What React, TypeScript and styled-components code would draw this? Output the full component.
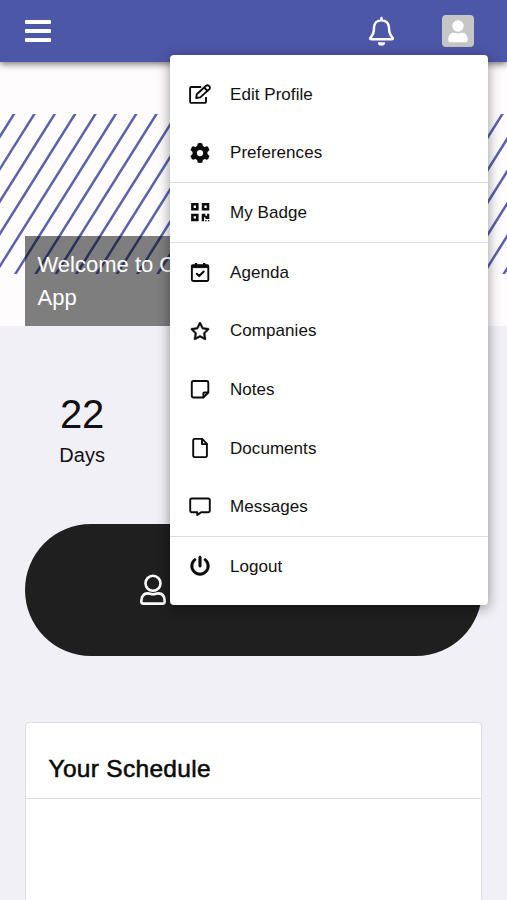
import React from 'react';
import styled, { createGlobalStyle } from 'styled-components';
import { FaGear, FaPowerOff, FaRegStar } from 'react-icons/fa6';

const GlobalStyle = createGlobalStyle`
  * { box-sizing: border-box; }
  html, body { margin: 0; padding: 0; background: #f1f0f6; }
  body { font-family: "Liberation Sans", Arial, sans-serif; color: #111; overflow: hidden; }
`;

const Page = styled.div`
  position: relative;
  width: 507px;
  height: 900px;
  overflow: hidden;
  background: #f1f0f6;
`;

const Header = styled.header`
  position: relative;
  z-index: 1;
  display: flex;
  align-items: center;
  height: 62px;
  padding: 0 33px 0 25px;
  background: #4d57a7;
  box-shadow: 0 2px 7px rgba(0, 0, 0, 0.55);
`;

const MenuButton = styled.button`
  display: flex;
  flex-direction: column;
  gap: 5px;
  width: 26px;
  padding: 0;
  border: 0;
  background: none;
`;

const MenuBar = styled.span`
  height: 4.3px;
  border-radius: 1px;
  background: #fff;
`;

const BellButton = styled.button`
  display: flex;
  margin-left: auto;
  margin-right: 47px;
  padding: 0;
  border: 0;
  background: none;
`;

const Avatar = styled.div`
  display: flex;
  width: 32px;
  height: 32px;
  border-radius: 4px;
  background: #c6c6c6;
`;

const Hero = styled.section`
  display: grid;
  height: 264px;
  background: #fefcfd;
`;

const Stripes = styled.svg`
  grid-area: 1 / 1;
  display: block;
  margin-top: 52px;
  overflow: hidden;
`;

const Caption = styled.h1`
  grid-area: 1 / 1;
  align-self: end;
  z-index: 0;
  height: 90px;
  margin: 0 25px;
  padding: 11.5px 12.5px;
  background: rgba(0, 0, 0, 0.5);
  color: #fff;
  font-size: 22px;
  font-weight: 400;
  line-height: 33px;
`;

const Content = styled.main`
  display: flex;
  flex-direction: column;
  padding: 64px 25px 0;
`;

const Countdown = styled.div`
  display: grid;
  grid-template-columns: repeat(4, 1fr);
  height: 134px;
  text-align: center;
`;

const CountNumber = styled.div`
  font-size: 40px;
  line-height: 48px;
`;

const CountLabel = styled.div`
  margin-top: 4px;
  font-size: 20px;
  line-height: 26px;
`;

const ProfileButton = styled.button`
  display: flex;
  align-items: center;
  height: 132px;
  padding: 0 0 0 114px;
  border: 0;
  border-radius: 66px;
  background: #1f1f1f;
`;

const Card = styled.section`
  height: 240px;
  margin-top: 66px;
  border: 1px solid #dfdfe3;
  border-radius: 4px;
  background: #fff;
`;

const CardTitle = styled.h2`
  height: 76px;
  margin: 0;
  padding: 16px 22.5px 0;
  border-bottom: 1px solid #dfdfe3;
  color: #0a0a0a;
  font-size: 24.5px;
  font-weight: 400;
  line-height: 60px;
  letter-spacing: 0.3px;
  -webkit-text-stroke: 0.55px #0a0a0a;
`;

const Dropdown = styled.nav`
  position: absolute;
  z-index: 2;
  top: 55px;
  left: 169.5px;
  width: 318px;
  height: 550px;
  padding: 9.5px 0;
  border-radius: 4px;
  background: #fff;
  box-shadow: 0 3px 13px rgba(0, 0, 0, 0.42);
`;

const Group = styled.div`
  & + & { border-top: 1px solid #dcdddd; }
`;

const Item = styled.a`
  display: flex;
  align-items: center;
  height: 58.7px;
  padding-left: 18.5px;
  gap: 18px;
  color: #111;
  font-size: 17px;
  letter-spacing: 0.05px;
`;

const Label = styled.span`
  padding-top: 1.6px;
`;

const IconBox = styled.span`
  display: flex;
  align-items: center;
  justify-content: center;
  width: 24px;
  height: 24px;
  color: #0b0b0b;
`;

const Glyph = ({ children }: { children: React.ReactNode }) => (
  <svg width="24" height="24" viewBox="0 0 24 24" fill="none" stroke="currentColor" strokeWidth="1.9" strokeLinejoin="round" strokeLinecap="round">
    {children}
  </svg>
);

const EditIcon = () => (
  <Glyph>
    <path d="M13.200 5H3.300a1.200 1.200 0 0 0-1.200 1.200v13.500a1.200 1.200 0 0 0 1.200 1.200h13.500a1.200 1.200 0 0 0 1.200-1.200v-4.700" strokeLinecap="butt" />
    <path d="M8.200 16l.6-3.800 9.300-8.400a1.900 1.900 0 0 1 2.700 0l.6.6a1.900 1.900 0 0 1 0 2.700l-9.200 8.300zM16.400 5.800l3.200 3.200" />
  </Glyph>
);

const QrIcon = () => (
  <Glyph>
    <g strokeWidth="2.6" strokeLinejoin="miter">
      <path d="M4.400 4.300h4.900v4.900h-4.900zM15.100 4.300h4.900v4.900h-4.900zM4.400 15h4.900v4.900h-4.900z" />
    </g>
    <path d="M13.700 13.700h3.700v2h1.700v-2h2.200v5.400h-3.900v-1.800h-1.300v3.900h-2.400zM17.200 20h1.400v1.200h-1.400zM19.900 20h1.400v1.200h-1.400z" fill="currentColor" stroke="none" />
  </Glyph>
);

const AgendaIcon = () => (
  <Glyph>
    <rect x="3.900" y="5.200" width="16.400" height="15.800" rx="1.200" />
    <path d="M4 5.300h16.200v2.300H4z" fill="currentColor" strokeWidth="1" />
    <path d="M8 3v3M16.200 3v3" strokeWidth="2.300" strokeLinecap="butt" />
    <path d="M8.800 13.800l2.400 2.300 4.500-4.500" strokeWidth="2.100" />
  </Glyph>
);

const NoteIcon = () => (
  <Glyph>
    <path d="M5.200 4h13.700a1.400 1.400 0 0 1 1.400 1.400v10.100l-5 5H5.200a1.400 1.400 0 0 1-1.400-1.400V5.400A1.400 1.400 0 0 1 5.200 4z" />
    <path d="M20.200 15.500h-3.900a.9.900 0 0 0-.9.900v3.900" />
  </Glyph>
);

const DocumentIcon = () => (
  <Glyph>
    <path d="M6.600 2.900h7.600l4.700 4.900v11.900a1.400 1.400 0 0 1-1.400 1.400H6.600a1.400 1.400 0 0 1-1.400-1.400V4.300a1.400 1.400 0 0 1 1.400-1.400z" />
    <path d="M14 3.200v4.900h4.800" />
  </Glyph>
);

const MessageIcon = () => (
  <Glyph>
    <path d="M3.600 3.500h16.800a1.400 1.400 0 0 1 1.400 1.400v10.900a1.400 1.400 0 0 1-1.400 1.400h-7.300L9.300 20.100v-2.900H3.600a1.400 1.400 0 0 1-1.400-1.400V4.900a1.400 1.400 0 0 1 1.400-1.400z" />
  </Glyph>
);

const groups = [
  [
    { label: 'Edit Profile', icon: <EditIcon /> },
    { label: 'Preferences', icon: <FaGear size={20} /> },
  ],
  [{ label: 'My Badge', icon: <QrIcon /> }],
  [
    { label: 'Agenda', icon: <AgendaIcon /> },
    { label: 'Companies', icon: <FaRegStar size={20} strokeWidth={14} overflow="visible" /> },
    { label: 'Notes', icon: <NoteIcon /> },
    { label: 'Documents', icon: <DocumentIcon /> },
    { label: 'Messages', icon: <MessageIcon /> },
  ],
  [{ label: 'Logout', icon: <FaPowerOff size={20} strokeWidth={14} overflow="visible" /> }],
];

const stripeOffsets = Array.from({ length: 31 }, (_, i) => 14 + i * 20.35);

export default function App() {
  return (
    <>
      <GlobalStyle />
      <Page>
        <Header>
          <MenuButton aria-label="Menu">
            <MenuBar />
            <MenuBar />
            <MenuBar />
          </MenuButton>
          <BellButton aria-label="Notifications">
            <svg width="27" height="30" viewBox="0 0 27 30" fill="none" stroke="#fff" strokeWidth="2.500" strokeLinejoin="round" strokeLinecap="round">
              <path d="M13.500 2v1.900M13.500 4.200c-4.600 0-7.500 3.300-7.500 7.600 0 5.300-1.300 7.700-3.500 9.800-.7.700-.4 1.700.6 1.700h20.800c1 0 1.300-1 .6-1.700-2.200-2.100-3.500-4.500-3.500-9.800 0-4.300-2.900-7.600-7.500-7.600z" />
              <path d="M9.900 26.300h7.200a3.600 3.500 0 0 1-7.200 0z" fill="#fff" stroke="none" />
            </svg>
          </BellButton>
          <Avatar>
            <svg width="32" height="32" viewBox="0 0 32 32" fill="#fff">
              <circle cx="16" cy="11" r="5.700" />
              <path d="M6.300 25.200c0-4.800 2.200-7.400 5.500-7.400 1.500 0 2.300.7 4.200.7s2.700-.7 4.200-.7c3.300 0 5.500 2.600 5.500 7.400 0 1.300-.8 2-2 2H8.300c-1.200 0-2-.7-2-2z" />
            </svg>
          </Avatar>
        </Header>
        <Hero>
          <Stripes width="507" height="160" viewBox="0 0 507 160">
            {stripeOffsets.map((x) => (
              <line key={x} x1={x + 6.3} y1={-10} x2={x - 106.7} y2={170} stroke="#5962ad" strokeWidth="2.5" />
            ))}
          </Stripes>
          <Caption>
            Welcome to Our
            <br />
            App
          </Caption>
        </Hero>
        <Content>
          <Countdown>
            <div>
              <CountNumber>22</CountNumber>
              <CountLabel>Days</CountLabel>
            </div>
          </Countdown>
          <ProfileButton aria-label="Profile">
            <svg width="28" height="32" viewBox="0 0 28 32" fill="none" stroke="#fff" strokeWidth="2.600" strokeLinejoin="round">
              <circle cx="14" cy="9.300" r="7.500" />
              <path d="M2.300 27.300c0-5.300 2.500-7.900 6.400-7.900 1.900 0 3 .9 5.300.9s3.400-.9 5.300-.9c3.900 0 6.400 2.600 6.400 7.900 0 1.500-.7 2.300-2.100 2.300H4.400c-1.400 0-2.100-.8-2.100-2.300z" />
            </svg>
          </ProfileButton>
          <Card>
            <CardTitle>Your Schedule</CardTitle>
          </Card>
        </Content>
        <Dropdown>
          {groups.map((items) => (
            <Group key={items[0].label}>
              {items.map(({ label, icon }) => (
                <Item key={label}>
                  <IconBox>{icon}</IconBox>
                  <Label>{label}</Label>
                </Item>
              ))}
            </Group>
          ))}
        </Dropdown>
      </Page>
    </>
  );
}
